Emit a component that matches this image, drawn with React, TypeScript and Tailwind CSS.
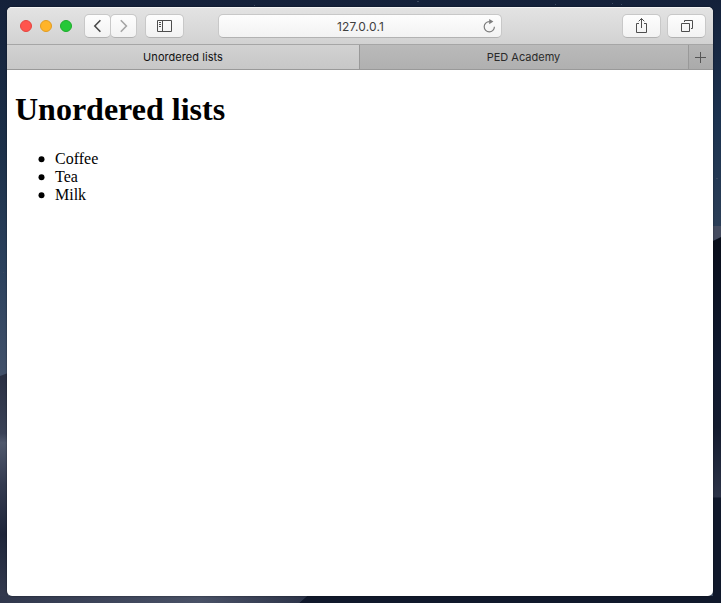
import type { ReactNode } from "react";

function Wallpaper() {
  return (
    <svg className="absolute inset-0 h-full w-full" viewBox="0 0 721 603" preserveAspectRatio="none" aria-hidden="true">
      <defs>
        <linearGradient id="sky" x1="0" y1="0" x2="0" y2="1">
          <stop offset="0" stopColor="#14213a" />
          <stop offset="0.25" stopColor="#1c3049" />
          <stop offset="0.45" stopColor="#2b415d" />
          <stop offset="0.63" stopColor="#43526b" />
          <stop offset="1" stopColor="#43526b" />
        </linearGradient>
        <linearGradient id="skyRight" x1="0" y1="0" x2="0" y2="1">
          <stop offset="0" stopColor="#14213a" />
          <stop offset="0.5" stopColor="#1c3350" />
          <stop offset="1" stopColor="#2d3f58" />
        </linearGradient>
        <linearGradient id="dune" x1="0" y1="374" x2="0" y2="603" gradientUnits="userSpaceOnUse">
          <stop offset="0" stopColor="#292f42" />
          <stop offset="0.26" stopColor="#3a4257" />
          <stop offset="0.3" stopColor="#4f586c" />
          <stop offset="0.48" stopColor="#343b50" />
          <stop offset="0.7" stopColor="#1f263a" />
          <stop offset="1" stopColor="#343b50" />
        </linearGradient>
        <linearGradient id="floor" x1="0" y1="0" x2="1" y2="0">
          <stop offset="0" stopColor="#30374c" />
          <stop offset="0.65" stopColor="#495166" />
          <stop offset="1" stopColor="#2d3449" />
        </linearGradient>
        <linearGradient id="shade" x1="0" y1="236" x2="0" y2="603" gradientUnits="userSpaceOnUse">
          <stop offset="0" stopColor="#080d1a" />
          <stop offset="0.35" stopColor="#101a30" />
          <stop offset="0.52" stopColor="#131b2e" />
          <stop offset="0.71" stopColor="#2c3348" />
          <stop offset="0.715" stopColor="#10182b" />
          <stop offset="1" stopColor="#10182b" />
        </linearGradient>
      </defs>
      <rect width="721" height="603" fill="url(#sky)" />
      <rect x="360" width="361" height="240" fill="url(#skyRight)" />
      <path d="M713 226h8v12l-8 3z" fill="#454c60" />
      <path d="M0 376l8-3v230H0z" fill="url(#dune)" />
      <path d="M0 596h307l-8 7H0z" fill="url(#floor)" />
      <path d="M713 241l8-4v366H299l8-7h406z" fill="url(#shade)" />
      <path d="M254 5h1v1h-1zM417 1h2v1h-2zM555 4h1v1h-1zM612 3h1v1h-1zM621 4h1v1h-1zM716 178h2v1h-2zM3 272h1v1H3z" fill="#3c4a60" />
    </svg>
  );
}

const buttonLook =
  "flex h-6 items-center justify-center border border-[#c8c8c8] border-b-[#b2b2b2] bg-linear-to-b from-[#fdfdfd] to-[#f2f2f2]";

function ToolButton({ label, className, children }: { label: string; className: string; children: ReactNode }) {
  return (
    <button aria-label={label} className={`${buttonLook} ${className}`}>
      {children}
    </button>
  );
}

function Toolbar() {
  return (
    <header className="flex h-[38px] shrink-0 items-center border-t border-b border-t-[#f4f4f4] border-b-[#a6a6a6] bg-linear-to-b from-[#e3e3e3] to-[#d2d2d2] pr-[7px] pl-[13px]">
      <div className="flex gap-2">
        <span className="size-3 rounded-full border border-[#e5453f] bg-[#ff544d]" />
        <span className="size-3 rounded-full border border-[#e19c22] bg-[#ffb429]" />
        <span className="size-3 rounded-full border border-[#1dac2b] bg-[#25c838]" />
      </div>
      <div className="ml-3 flex">
        <ToolButton label="Back" className="w-[27px] rounded-[5px]">
          <svg width="25" height="22" viewBox="0 0 25 22" fill="none" stroke="#4b4b4b" strokeWidth="1.6">
            <path d="M15.400 5.200L9.800 11l5.600 5.800" />
          </svg>
        </ToolButton>
        <ToolButton label="Forward" className="-ml-px w-[27px] rounded-[5px]">
          <svg width="25" height="22" viewBox="0 0 25 22" fill="none" stroke="#a5a5a5" strokeWidth="1.600">
            <path d="M9.800 5.200l5.600 5.800-5.600 5.800" />
          </svg>
        </ToolButton>
      </div>
      <ToolButton label="Sidebar" className="ml-2 w-[39px] rounded-[5px]">
        <svg width="37" height="22" viewBox="0 0 37 22" fill="none" stroke="#4e4e4e" strokeWidth="1">
          <path d="M11.500 5.500h14v11h-14zM16.500 5.500v11M13 7.500h2M13 9.500h2M13 11.500h2" />
        </svg>
      </ToolButton>
      <div className={`${buttonLook} relative ml-[34px] w-[284px] rounded-[5px] font-[Inter,sans-serif] text-[12px] tracking-[0.15px] text-[#3f3f3f]`}>
        <span className="pt-0.5 pl-px">127.0.0.1</span>
        <svg className="absolute right-1 top-0" width="16" height="22" viewBox="0 0 16 22" fill="none" stroke="#7d7d7d" strokeWidth="1.200">
          <path d="M8.800 6.600H8.300A5.100 5.100 0 1 0 13.400 11.700" />
          <path d="M8.200 4v5.200l4.200-2.600z" fill="#7d7d7d" stroke="none" />
        </svg>
      </div>
      <div className="ml-auto flex gap-1.5">
        <ToolButton label="Share" className="w-[39px] rounded-[5px]">
          <svg width="37" height="22" viewBox="0 0 37 22" fill="none" stroke="#4e4e4e" strokeWidth="1">
            <path d="M16 8.500h-2.500v9h10v-9H21M18.500 3.500V13M15.700 6.300l2.800-2.800 2.800 2.800" />
          </svg>
        </ToolButton>
        <ToolButton label="Show all tabs" className="w-[39px] rounded-[5px]">
          <svg width="37" height="22" viewBox="0 0 37 22" fill="none" stroke="#4e4e4e" strokeWidth="1">
            <path d="M13.500 8.500h8v8h-8zM16.500 7V5.500h8v8H23" />
          </svg>
        </ToolButton>
      </div>
    </header>
  );
}

function TabBar() {
  return (
    <nav className="flex h-[25px] shrink-0 border-b border-[#999] font-[Inter,sans-serif] text-[11px] leading-6">
      <div className="w-[352px] bg-linear-to-b from-[#d2d2d2] to-[#c7c7c7] text-center tracking-[0.05px] text-[#111]">Unordered lists</div>
      <div className="w-[329px] border-l border-[#999] bg-linear-to-b from-[#bababa] to-[#b0b0b0] pr-px text-center text-[#2a2a2a]">PED Academy</div>
      <button aria-label="New tab" className="flex flex-1 items-center border-l border-[#999] bg-linear-to-b from-[#b5b5b5] to-[#aaa]">
        <svg width="24" height="24" viewBox="0 0 24 24" stroke="#555" strokeWidth="1">
          <path d="M6 12.500h11M11.500 7v11" />
        </svg>
      </button>
    </nav>
  );
}

function Item({ children }: { children: ReactNode }) {
  return (
    <li className="flex items-center">
      <span className="mr-[10px] ml-[-17px] size-[6px] translate-x-[0.5px] translate-y-[0.2px] rounded-full bg-black" />
      <span className="ml-px">{children}</span>
    </li>
  );
}

export default function App() {
  return (
    <div className="relative h-[603px] w-[721px] overflow-hidden bg-[#14213a]">
      <Wallpaper />
      <div className="relative px-[7px] pt-[7px]">
        <div className="flex h-[589px] w-[706px] flex-col overflow-hidden rounded-[5px] bg-white shadow-[0_0_2px_rgba(0,0,0,0.6)]">
          <Toolbar />
          <TabBar />
          <main className="px-2 font-['Liberation_Serif',serif] text-base leading-[18px] text-black">
            <h1 className="mt-[21px] text-[32px] leading-[37px] font-bold">Unordered lists</h1>
            <ul className="mt-[22px] pl-10">
              <Item>Coffee</Item>
              <Item>Tea</Item>
              <Item>Milk</Item>
            </ul>
          </main>
        </div>
      </div>
    </div>
  );
}
